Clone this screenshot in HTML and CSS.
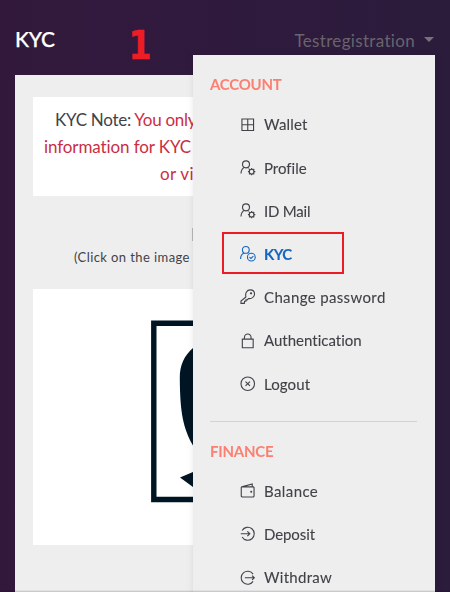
FILE: index.html
```html
<!DOCTYPE html>
<html lang="en">
<head>
<meta charset="utf-8">
<title>KYC</title>
<link rel="stylesheet" href="styles.css">
</head>
<body>
<svg class="defs" width="0" height="0" aria-hidden="true">
  <symbol id="user-gear" viewBox="0 0 16 16" overflow="visible"><circle cx="6.200" cy="4.500" r="3.600"/><path d="M1 14c.2-3.200 1.300-5.200 3.300-6.200M7.800 7.800l1.200.6"/><circle cx="12" cy="12" r="2.400"/><path d="M12 8.200v1.400M12 14.400v1.400M8.200 12h1.400M14.400 12h1.400M9.300 9.300l1 1M13.700 13.700l1 1M9.300 14.700l1-1M13.700 10.300l1-1"/></symbol>
</svg>
<header class="top">
  <h1>KYC</h1>
  <div class="account">Testregistration<i class="caret"></i></div>
</header>
<main class="card">
  <section class="note">
    <p class="l1"><span>KYC Note:</span> You only</p>
    <p class="l2">information for KYC</p>
    <p class="l3">or vi</p>
  </section>
  <p class="heading">I</p>
  <p class="hint">(Click on the image</p>
  <div class="picture">
    <svg width="160" height="256" viewBox="33 289 160 256">
      <path d="M193 323.300H153.800V499.500H193" fill="none" stroke="#001523" stroke-width="5.400"/>
      <path d="M193 348C184 356 179.800 365 179.800 378C180 412 183 428 193 445.500ZM193 472L180 477.500L193 487Z" fill="#001523"/>
    </svg>
  </div>
</main>
<nav class="menu">
  <h2 class="t-account">ACCOUNT</h2>
  <ul>
    <li><svg viewBox="0 0 16 16"><path d="M2 2h12v12H2zM8 2v12M2 8h12"/></svg><a class="w1">Wallet</a></li>
    <li><svg viewBox="0 0 16 16"><use href="#user-gear"/></svg><a class="w2">Profile</a></li>
    <li><svg viewBox="0 0 16 16"><use href="#user-gear"/></svg><a class="w3">ID Mail</a></li>
    <li class="active"><svg viewBox="0 0 16 16"><circle cx="6" cy="4" r="3.500"/><path d="M.6 13.500c0-3.200 1.300-5.300 3.600-6.200"/><circle cx="11.700" cy="11.500" r="4"/><path d="M9.700 11.400l1.600 1.500 2.500-2.500"/></svg><a class="w4">KYC</a></li>
    <li><svg viewBox="0 0 16 16"><path d="M6.100 8.300C5.100 4.300 7.100.9 10.600.9c2.800 0 4.400 2 4.400 4.300 0 3.200-3.100 5.200-6.300 4.600l-1.200 1.400H6.100v1.500H4.700l-.2 2.100H1v-2.400z"/><circle cx="11.400" cy="4.500" r=".6"/></svg><a class="w5">Change password</a></li>
    <li><svg viewBox="0 0 16 16"><path d="M2.400 6.300h11.200v8.900H2.400zM4.600 6.300V4.400c0-4.400 6.800-4.400 6.800 0v1.900"/></svg><a class="w6">Authentication</a></li>
    <li><svg viewBox="0 0 16 16"><circle cx="8" cy="8" r="7"/><path d="M5.700 5.700l4.600 4.600M10.300 5.700l-4.600 4.600"/></svg><a class="w7">Logout</a></li>
  </ul>
  <hr>
  <h2 class="t-finance">FINANCE</h2>
  <ul>
    <li><svg viewBox="0 0 16 16"><path d="M1.800 4h12l.7.700v9l-.7.700H2.200l-.9-.8V4.500zM1.800 4l10.800-3v3"/><circle cx="11.600" cy="9" r=".5"/></svg><a class="w8">Balance</a></li>
    <li><svg viewBox="0 0 16 16"><path d="M2.200 4.600a6.700 6.700 0 1 1 0 6.800M.8 8h9M7.600 5.500L10.100 8l-2.500 2.500"/></svg><a class="w9">Deposit</a></li>
    <li><svg viewBox="0 0 16 16"><path d="M13.500 4.300a6.700 6.700 0 1 0 0 7.400M5 8h9.800M12.500 5.700L14.800 8l-2.300 2.300"/></svg><a class="w10">Withdraw</a></li>
  </ul>
</nav>
<div class="step">1</div>
<div class="highlight"></div>
</body>
</html>
```
FILE: styles.css
```css
* { box-sizing: border-box; margin: 0; padding: 0; }
html { overflow: hidden; }
body {
  width: 450px;
  height: 592px;
  overflow: hidden;
  position: relative;
  background: linear-gradient(90deg, #32193c, #2f1a3e 50%, #2b1c3b);
  font-family: Lato, "Liberation Sans", sans-serif;
  font-variant-ligatures: none;
  color: #414248;
}
body::after {
  content: "";
  position: absolute;
  left: 0;
  right: 0;
  bottom: 0;
  height: 2px;
  background: linear-gradient(transparent, rgba(0, 0, 0, .2));
}
.defs { position: absolute; }
.top {
  height: 75px;
  padding: 26px 16px 0 15px;
  display: flex;
  justify-content: space-between;
}
h1 { font-size: 21px; line-height: 26px; font-weight: 500; color: #fff; -webkit-text-stroke: .25px #fff; letter-spacing: -.2px; }
.account { display: flex; gap: 9px; font-size: 17px; line-height: 29px; color: #69646d; letter-spacing: .33px; }
.caret { width: 10px; height: 5px; margin-top: 11px; background: #77727a; clip-path: polygon(0 0, 100% 0, 50% 100%); }
.card { margin: 0 16px 0 15px; padding: 22px 18px; height: 517px; background: #eee; }
.note { height: 99px; background: #fff; padding-top: 9px; color: #ca2e43; font-size: 17px; line-height: 27px; white-space: nowrap; }
.note span { color: #414248; }
.l1 { padding-left: 22px; letter-spacing: -.28px; }
.l2 { padding-left: 11px; letter-spacing: -.1px; }
.l3 { padding-left: 127px; letter-spacing: .3px; }
.heading { margin-top: 28px; padding-left: 158px; height: 20px; font-size: 17px; line-height: 22px; color: #77787c; will-change: transform; }
.hint { padding-left: 41px; height: 45px; font-size: 13px; line-height: 26px; letter-spacing: .41px; white-space: nowrap; }
.picture { height: 256px; background: #fff; }
.picture svg { display: block; }
.menu {
  position: absolute;
  left: 193px;
  top: 55px;
  width: 241.500px;
  height: 550px;
  padding: 19px 17px 0;
  background: #eee;
  box-shadow: 0 0 7px rgba(0, 0, 0, .09);
}
h2 { font-size: 15px; line-height: 20px; font-weight: 700; color: #fb8072; white-space: nowrap; letter-spacing: -.25px; }
h2 + ul { margin-top: 8.800px; }
ul { list-style: none; }
li { height: 43.200px; padding-left: 29.500px; display: flex; align-items: center; gap: 9px; font-size: 15px; white-space: nowrap; -webkit-text-stroke: .1px; }
li svg { width: 15.500px; height: 15.500px; fill: none; stroke: currentColor; stroke-width: 1.150; overflow: visible; }
.active { color: #1565c0; font-weight: 700; }
.w1 { letter-spacing: .2px; }
.w3 { letter-spacing: -.2px; }
.w4 { letter-spacing: -.6px; }
.w5 { letter-spacing: .36px; }
.w7 { letter-spacing: .1px; }
.w8 { letter-spacing: .4px; }
.w9 { letter-spacing: -.1px; }
.w10 { letter-spacing: .28px; }
hr { border: 0; height: 1px; background: #d3d3d3; margin: 15.500px 1px 19px 0; }
.step { position: absolute; left: 127.500px; top: 23px; font: 700 38.500px/45px "DejaVu Sans", sans-serif; color: #ee1c25; transform: scaleX(.86); transform-origin: 3px 0; -webkit-text-stroke: .5px #ee1c25; }
.highlight { position: absolute; left: 222px; top: 232px; width: 122px; height: 42px; border: 2px solid #ed1b24; }
```
